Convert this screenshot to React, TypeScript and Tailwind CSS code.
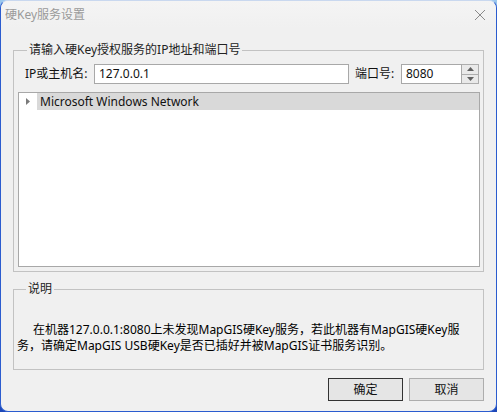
import React from 'react';

const font = { fontFamily: '"Noto Sans", "Noto Sans CJK SC", sans-serif' };

const TitleBar: React.FC = () => (
  <div className="h-[27px] flex items-center justify-between pl-[4px] pr-[10px] bg-gradient-to-b from-[#f4f4f4] to-[#f0f0f0]">
    <span className="text-[12px] text-[#9a9a9a] leading-[16px]">硬Key服务设置</span>
    <svg width="12" height="12" viewBox="0 0 12 12" className="mt-[1px]">
      <path d="M1 1 L11 11 M11 1 L1 11" stroke="#8a8a8a" strokeWidth="1" />
    </svg>
  </div>
);

const Spinner: React.FC = () => (
  <div className="w-[17px] h-[20px] flex flex-col border border-l-0 border-[#adadad]">
    <div className="flex-1 flex items-center justify-center bg-[#e9e9e9] border-b border-[#adadad]">
      <svg width="7" height="4" viewBox="0 0 7 4"><path d="M0 4 L3.5 0 L7 4 Z" fill="#606060" /></svg>
    </div>
    <div className="flex-1 flex items-center justify-center bg-[#e9e9e9]">
      <svg width="7" height="4" viewBox="0 0 7 4"><path d="M0 0 L7 0 L3.5 4 Z" fill="#606060" /></svg>
    </div>
  </div>
);

export default function App() {
  return (
    <div className="w-[497px] h-[412px] bg-gradient-to-b from-[#9cc8ee] to-[#1d47b8]" style={font}>
      <div className="h-full flex flex-col rounded-[8px] overflow-hidden border border-[#2b5ccf] border-t-[#c9d8ef] bg-[#f0f0f0] text-[12px] text-[#111]">
        <TitleBar />

        <fieldset className="mt-[14px] mx-[12px] border border-[#c2c2c2] pl-[4px] pr-[3px] pb-[4px]">
          <legend className="ml-[9px] px-[2px] leading-[16px] text-[#222]">请输入硬Key授权服务的IP地址和端口号</legend>
          <div className="mt-[6px] flex items-center h-[20px] pl-[7px]">
            <span className="w-[69px] leading-[16px]">IP或主机名:</span>
            <div className="w-[255px] h-[20px] border border-[#a8a8a8] bg-white flex items-center pl-[4px]">127.0.0.1</div>
            <span className="w-[52px] pl-[6px] leading-[16px]">端口号:</span>
            <div className="w-[61px] h-[20px] border border-[#a8a8a8] bg-white flex items-center pl-[4px]">8080</div>
            <Spinner />
          </div>
          <div className="mt-[8px] h-[175px] border border-[#a8a8a8] bg-white">
            <div className="flex items-center h-[17px]">
              <div className="w-[18px] flex justify-center">
                <svg width="4" height="7" viewBox="0 0 4 7"><path d="M0 0 L4 3.5 L0 7 Z" fill="#7a7a7a" /></svg>
              </div>
              <div className="flex-1 h-full bg-[#d9d9d9] flex items-center pl-[3px] leading-[16px]">Microsoft Windows Network</div>
            </div>
          </div>
        </fieldset>

        <fieldset className="mt-[9px] mx-[12px] border border-[#c2c2c2] pl-[3px] pr-[6px] pb-[15px]">
          <legend className="ml-[9px] px-[2px] leading-[16px] text-[#222]">说明</legend>
          <p className="mt-[25px] leading-[16px] text-black">
            <span className="block indent-[16px]">在机器127.0.0.1:8080上未发现MapGIS硬Key服务，若此机器有MapGIS硬Key服</span>
            <span className="block">务，请确定MapGIS USB硬Key是否已插好并被MapGIS证书服务识别。</span>
          </p>
        </fieldset>

        <div className="mt-[8px] mr-[12px] flex justify-end gap-[6px]">
          <button className="w-[75px] h-[23px] border border-[#333] bg-[#e5e5e5] leading-[16px]">确定</button>
          <button className="w-[75px] h-[23px] border border-[#adadad] bg-[#e5e5e5] leading-[16px]">取消</button>
        </div>
      </div>
    </div>
  );
}
